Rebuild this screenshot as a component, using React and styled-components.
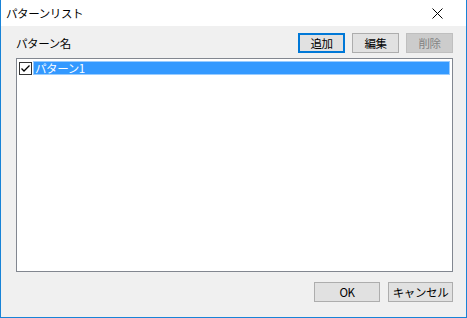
import React from 'react'
import styled, { createGlobalStyle, css } from 'styled-components'

const Global = createGlobalStyle`
body {
  margin: 0;
  background: #ffffff;
  font-family: "Noto Sans CJK JP", "Noto Sans", sans-serif;
  font-size: 11px;
  letter-spacing: -0.4px;
  color: #000;
}
`

const Window = styled.div`
width: 467px;
height: 318px;
box-sizing: border-box;
border: 1px solid #1883d7;
border-top: none;
display: flex;
flex-direction: column;
background: #f0f0f0;
`

const TitleBar = styled.div`
height: 26px;
background: #ffffff;
display: flex;
align-items: center;
justify-content: space-between;
padding-left: 5px;
`

const Title = styled.span`
font-size: 11.5px;
line-height: 14px;
`

const CloseButton = styled.div`
width: 46px;
height: 26px;
display: flex;
align-items: center;
justify-content: center;
margin-right: 6px;
`

const Body = styled.div`
flex: 1;
display: flex;
flex-direction: column;
padding: 7px 13px 15px 15px;
`

const HeaderRow = styled.div`
display: flex;
align-items: center;
height: 20px;
margin-bottom: 5px;
`

const Label = styled.span`
flex: 1;
font-size: 11.5px;
`

const Buttons = styled.div`
display: flex;
gap: ${p => p.$gap || 8}px;
`

const Button = styled.div`
width: ${p => p.$w || 47}px;
height: 20px;
box-sizing: border-box;
display: flex;
align-items: center;
justify-content: center;
background: #e1e1e1;
border: 1px solid #adadad;
font-size: 11.5px;
color: #000;
${p => p.$default && css`
  border: 2px solid #0078d7;
`}
${p => p.$disabled && css`
  background: #cccccc;
  border-color: #bfbfbf;
  color: #838383;
`}
`

const ListBox = styled.div`
flex: 1;
background: #ffffff;
border: 1px solid #828790;
padding: 2px 2px;
`

const Row = styled.div`
display: flex;
align-items: center;
height: 14px;
`

const Check = styled.div`
width: 13px;
height: 13px;
box-sizing: border-box;
border: 1px solid #333333;
background: #ffffff;
display: flex;
align-items: center;
justify-content: center;
margin-right: 1px;
`

const ItemText = styled.div`
flex: 1;
height: 14px;
box-sizing: border-box;
background: #3399ff;
border: 1px solid #99ccff;
color: #ffffff;
font-size: 11.5px;
line-height: 12px;
padding-left: 1px;
`

const Footer = styled.div`
display: flex;
justify-content: flex-end;
margin-top: 10px;
`

export default function App() {
  return (
    <>
      <Global />
      <Window>
        <TitleBar>
          <Title>パターンリスト</Title>
          <CloseButton>
            <svg width="11" height="11" viewBox="0 0 11 11">
              <path d="M0.5 0.5 L10.5 10.5 M10.5 0.5 L0.5 10.5" stroke="#000" strokeWidth="1" fill="none" />
            </svg>
          </CloseButton>
        </TitleBar>
        <Body>
          <HeaderRow>
            <Label>パターン名</Label>
            <Buttons $gap={7}>
              <Button $default>追加</Button>
              <Button>編集</Button>
              <Button $disabled>削除</Button>
            </Buttons>
          </HeaderRow>
          <ListBox>
            <Row>
              <Check>
                <svg width="11" height="11" viewBox="0 0 11 11">
                  <path d="M1.5 5.5 L4 8 L9.5 2.5" stroke="#000" strokeWidth="1.3" fill="none" />
                </svg>
              </Check>
              <ItemText>パターン1</ItemText>
            </Row>
          </ListBox>
          <Footer>
            <Buttons $gap={8}>
              <Button $w={66}>OK</Button>
              <Button $w={65}>キャンセル</Button>
            </Buttons>
          </Footer>
        </Body>
      </Window>
    </>
  )
}
